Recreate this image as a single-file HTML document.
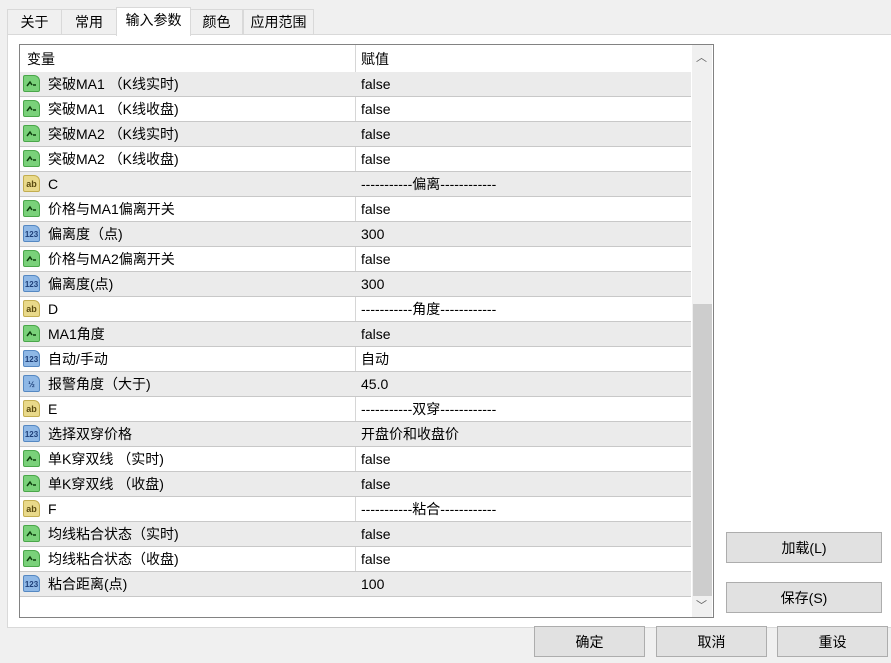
<html><head><style>
body{margin:0;width:891px;height:663px;background:#f0f0f0;font-family:"Liberation Sans","Noto Sans CJK SC",sans-serif;font-size:14px;color:#000;position:relative;overflow:hidden}
.tab{position:absolute;top:9px;height:24px;border:1px solid #d9d9d9;border-bottom:none;background:#f0f0f0;line-height:24px;text-align:center}
.panel{position:absolute;left:7px;top:34px;width:900px;height:592px;background:#fff;border:1px solid #d9d9d9}
.list{position:absolute;left:19px;top:44px;width:693px;height:572px;border:1px solid #828282;background:#fff;overflow:hidden}
.row{position:absolute;left:0;width:671px;height:24px;border-bottom:1px solid #c8c8c8;line-height:24px}
.g{background:#ebebeb}
.c1{position:absolute;left:28px}
.c2{position:absolute;left:341px}
.sep{position:absolute;left:335px;top:0;width:1px;height:552px;background:#d6d6d6}
.ic{position:absolute;left:3px;top:3px;width:17px;height:17px;border-radius:2px 6px 2px 2px;font-size:9px;line-height:17px;text-align:center;font-weight:bold}
.b{background:#7ad17a;border:1px solid #4aa64a;width:15px;height:15px}
.s{background:#e9d98a;border:1px solid #c2ad50;width:15px;height:15px;color:#5a4a10}
.n{background:#8fb8e6;border:1px solid #5588c2;width:15px;height:15px;color:#1d3e78;font-size:8px}
.btn{position:absolute;height:31px;background:#e1e1e1;border:1px solid #adadad;text-align:center;line-height:31px;box-sizing:border-box}
</style></head><body>
<div class="panel"></div>
<div class="tab" style="left:7px;width:53px">关于</div>
<div class="tab" style="left:61px;width:54px">常用</div>
<div class="tab" style="left:116px;width:73px;top:7px;height:28px;background:#fff;z-index:2">输入参数</div>
<div class="tab" style="left:190px;width:51px">颜色</div>
<div class="tab" style="left:243px;width:69px">应用范围</div>
<div class="list">
<div style="position:absolute;left:7px;top:2px;line-height:24px">变量</div>
<div style="position:absolute;left:341px;top:2px;line-height:24px">赋值</div>
<div class="sep"></div>
<div style="position:absolute;left:672px;top:0;width:20px;height:572px;background:#f0f0f0"></div>
<div style="position:absolute;left:673px;top:259px;width:19px;height:292px;background:#cdcdcd"></div>
<div style="position:absolute;left:676px;top:4px;font-size:11px;color:#606060">︿</div>
<div style="position:absolute;left:676px;top:552px;font-size:11px;color:#606060">﹀</div>
<div id="rows"></div>
</div>
<div class="btn" style="left:726px;top:532px;width:156px">加载(L)</div>
<div class="btn" style="left:726px;top:582px;width:156px">保存(S)</div>
<div class="btn" style="left:534px;top:626px;width:111px">确定</div>
<div class="btn" style="left:656px;top:626px;width:111px">取消</div>
<div class="btn" style="left:777px;top:626px;width:111px">重设</div>
<script>
var d=[["b","突破MA1 （K线实时)","false"],["b","突破MA1 （K线收盘)","false"],["b","突破MA2 （K线实时)","false"],["b","突破MA2 （K线收盘)","false"],["s","C","-----------偏离------------"],["b","价格与MA1偏离开关","false"],["n","偏离度（点)","300"],["b","价格与MA2偏离开关","false"],["n","偏离度(点)","300"],["s","D","-----------角度------------"],["b","MA1角度","false"],["n","自动/手动","自动"],["h","报警角度（大于)","45.0"],["s","E","-----------双穿------------"],["n","选择双穿价格","开盘价和收盘价"],["b","单K穿双线 （实时)","false"],["b","单K穿双线 （收盘)","false"],["s","F","-----------粘合------------"],["b","均线粘合状态（实时)","false"],["b","均线粘合状态（收盘)","false"],["n","粘合距离(点)","100"]];
var sv="<svg width='15' height='15' style='position:absolute;left:0;top:0'><path d='M3 10 L6 6 L8 9 M9 9 L12 9' stroke='#0d3d0d' stroke-width='1.5' fill='none'/></svg>";
var h="";d.forEach(function(r,i){var t={b:sv,s:"ab",n:"123",h:"½"}[r[0]];var c=r[0]=="h"?"n":r[0];
h+="<div class='row"+(i%2==0?" g":"")+"' style='top:"+(27+i*25)+"px'><div class='ic "+c+"'>"+t+"</div><span class='c1'>"+r[1]+"</span><span class='c2'>"+r[2]+"</span></div>";});
document.getElementById("rows").innerHTML=h;
</script>
</body></html>
